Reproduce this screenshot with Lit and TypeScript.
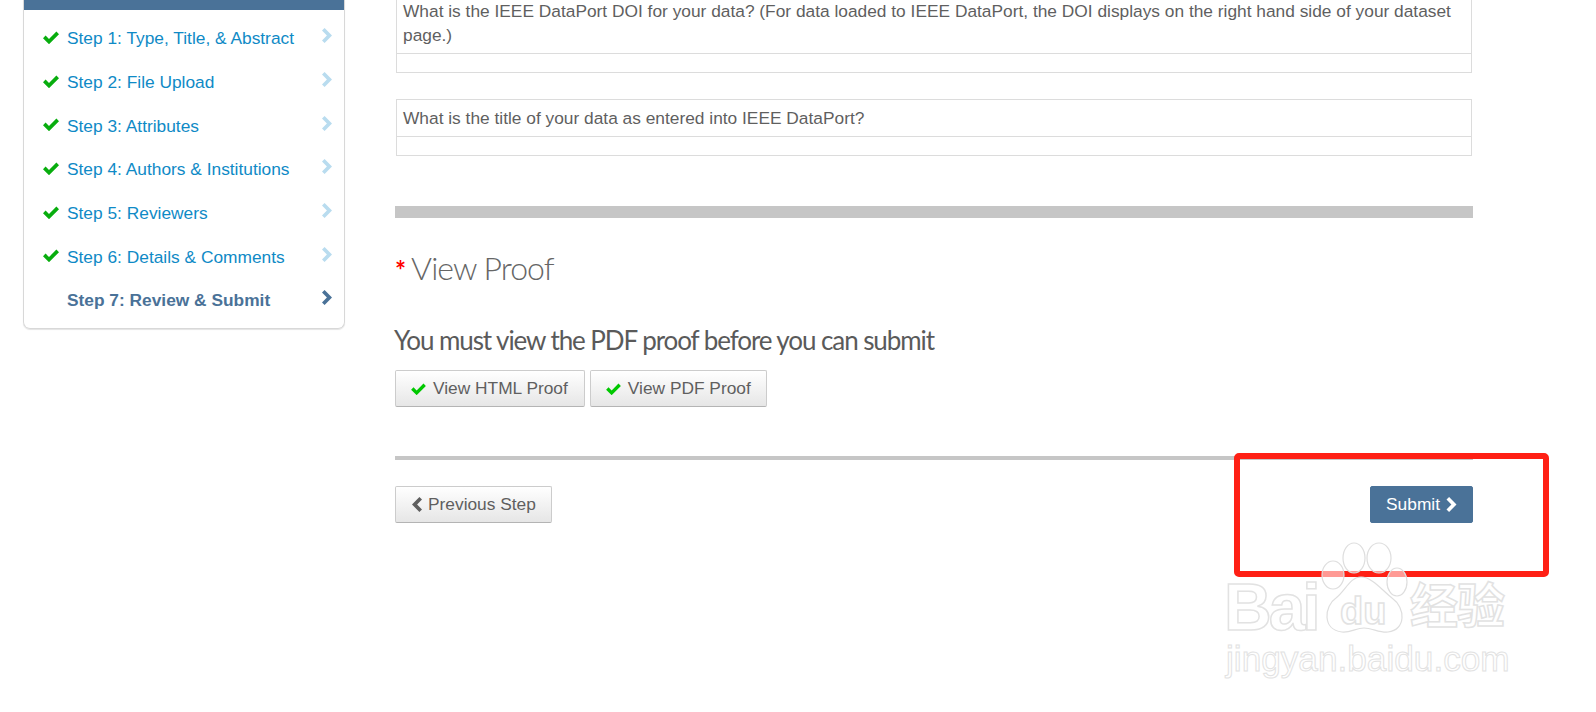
import { LitElement, html, css, svg } from "lit";
import { customElement } from "lit/decorators.js";

const check = (cls: string) => html`<svg class=${cls} viewBox="0 0 16 13"><path d="M0 7.2 2.6 4.6 6 8 13.4.6 16 3.2 6 13.2z" fill="currentColor"/></svg>`;
const chevR = (cls: string) => html`<svg class=${cls} viewBox="0 0 10 15"><path d="M2.6 0 10 7.5 2.6 15 0 12.4 4.9 7.5 0 2.6z" fill="currentColor"/></svg>`;
const chevL = (cls: string) => html`<svg class=${cls} viewBox="0 0 10 15"><path d="M7.4 0 0 7.5 7.4 15 10 12.4 5.1 7.5 10 2.6z" fill="currentColor"/></svg>`;

const steps = [
  "Step 1: Type, Title, & Abstract",
  "Step 2: File Upload",
  "Step 3: Attributes",
  "Step 4: Authors & Institutions",
  "Step 5: Reviewers",
  "Step 6: Details & Comments",
];

@customElement("app-root")
export class AppRoot extends LitElement {
  static styles = css`
    :host { display: block; position: relative; height: 712px; overflow: hidden; background: #fff;
      font-family: "Liberation Sans", Arial, sans-serif; font-size: 17.33px; color: #5f5f5f; }
    .page { display: flex; align-items: flex-start; padding-left: 23px; }
    .card { width: 322px; box-sizing: border-box; border: 1px solid #d8d8d8; border-top: 0; border-radius: 0 0 7px 7px;
      box-shadow: 0 1px 1px #e4e4e4; padding-bottom: 5px; flex: none; }
    .bar { height: 10px; background: #4a7298; margin-bottom: 7px; }
    .step { display: flex; align-items: center; height: 43.7px; padding: 0 12px 0 19px; color: #0f8ac6; }
    .step span { flex: 1; margin-left: 8px; }
    .ok { width: 16px; height: 13px; color: #08ad0e; flex: none; margin-top: -3px; }
    .chev { width: 10px; height: 15px; color: #b9dcef; flex: none; margin-top: -6px; }
    .current { color: #4a7298; font-weight: 700; }
    .current span { margin-left: 24px; }
    .current .chev { color: #4a7298; }
    .main { width: 1078px; margin-left: 50px; flex: none; }
    .tbl { border: 1px solid #dcdcdc; margin: 0 1px; }
    .tbl.first { border-top: 0; margin-top: -1px; margin-bottom: 26px; }
    .q { padding: 6px 6px; line-height: 24px; border-bottom: 1px solid #dcdcdc; }
    .first .q { padding-top: 0; padding-bottom: 6px; }
    .a { height: 18px; }
    .thick { height: 12px; background: #c6c6c6; margin-top: 50px; }
    h2 { margin: 30px 0 0; height: 40px; font: 300 32px/40px Lato, sans-serif; letter-spacing: -0.95px; display: flex; align-items: baseline; color: #666; }
    .star { color: #f00; font-size: 26px; margin-right: 6px; font-weight: 700; }
    h3 { margin: 36px 0 0 -1px; font: 400 26px/32px Lato, sans-serif; letter-spacing: -1.08px; color: #5a5a5a; white-space: nowrap; }
    .btns { display: flex; gap: 5px; margin-top: 14px; }
    .btn { display: flex; align-items: center; box-sizing: border-box; height: 37px; padding: 0 16px 0 15px; border: 1px solid #ccc;
      border-bottom-color: #b4b4b4; border-radius: 2px; background: linear-gradient(#fff, #e6e6e6); color: #5f5f5f; }
    .btn.pdf { padding-right: 15px; }
    .btn .ok { color: #00c800; margin: 0 7px 0 0; width: 15px; height: 12px; }
    .thin { height: 4px; background: #c6c6c6; margin-top: 49px; }
    .nav { display: flex; justify-content: space-between; margin-top: 26px; }
    .prev .c, .next .c { height: 15px; flex: none; }
    .btn.prev { padding: 0 15px 0 16px; }
    .prev .c { width: 10px; margin-right: 6px; color: #5f5f5f; }
    .btn.next { background: #4a7298; border-color: #4a7298; color: #fff; padding: 0 15px; }
    .next .c { width: 11px; margin-left: 6px; }
    .mark { position: absolute; left: 1234px; top: 453px; width: 315px; height: 124px; box-sizing: border-box;
      border: 6px solid #ff2015; border-radius: 5px; pointer-events: none; }
    .wm { position: absolute; left: 1224px; top: 540px; width: 300px; height: 150px; pointer-events: none; }
    .wm-t { position: absolute; color: #fff; -webkit-text-stroke: 1.5px #e2e2e2; white-space: nowrap; line-height: 1; font-family: "Liberation Sans", sans-serif; }
    .bai { left: 0; top: 34px; font-size: 66px; font-weight: 700; letter-spacing: -3px; }
    .du { left: 116px; top: 52px; font-size: 38px; font-weight: 700; }
    .cn { left: 186px; top: 38px; font-size: 48px; font-weight: 700; font-family: "Noto Sans CJK SC", sans-serif; letter-spacing: -1px; }
    .url { left: 2px; top: 101px; font-size: 35.2px; -webkit-text-stroke-width: 1px; }
    .paw { position: absolute; left: 90px; top: 0; width: 100px; height: 100px; }
  `;

  render() {
    return html`
      <div class="page">
        <nav class="card">
          <div class="bar"></div>
          ${steps.map((s) => html`<div class="step">${check("ok")}<span>${s}</span>${chevR("chev")}</div>`)}
          <div class="step current"><span>Step 7: Review &amp; Submit</span>${chevR("chev")}</div>
        </nav>
        <main class="main">
          <div class="tbl first">
            <div class="q">What is the IEEE DataPort DOI for your data? (For data loaded to IEEE DataPort, the DOI displays on the right hand side of your dataset page.)</div>
            <div class="a"></div>
          </div>
          <div class="tbl">
            <div class="q">What is the title of your data as entered into IEEE DataPort?</div>
            <div class="a"></div>
          </div>
          <div class="thick"></div>
          <h2><span class="star">*</span>View Proof</h2>
          <h3>You must view the PDF proof before you can submit</h3>
          <div class="btns">
            <div class="btn">${check("ok")}View HTML Proof</div>
            <div class="btn pdf">${check("ok")}View PDF Proof</div>
          </div>
          <div class="thin"></div>
          <div class="nav">
            <div class="btn prev">${chevL("c")}Previous Step</div>
            <div class="btn next">Submit${chevR("c")}</div>
          </div>
        </main>
      </div>
      <div class="mark"></div>
      <div class="wm">
        <svg class="paw" viewBox="0 0 100 100">
          ${svg`<g fill="#fff" fill-opacity=".55" stroke="#dedede" stroke-width="1.2">
            <ellipse cx="19" cy="35" rx="11" ry="14"/>
            <ellipse cx="40" cy="18" rx="11" ry="15"/>
            <ellipse cx="65" cy="18" rx="12" ry="15"/>
            <ellipse cx="83" cy="42" rx="10" ry="14"/>
            <path d="M47 37C36 37 32 50 22 58 10 66 8 90 28 92 36 93 42 88 50 88 58 88 66 93 74 92 92 90 92 68 78 58 68 50 58 37 47 37z"/>
          </g>`}
        </svg>
        <div class="wm-t bai">Bai</div>
        <div class="wm-t du">du</div>
        <div class="wm-t cn">经验</div>
        <div class="wm-t url">jingyan.baidu.com</div>
      </div>
    `;
  }
}
